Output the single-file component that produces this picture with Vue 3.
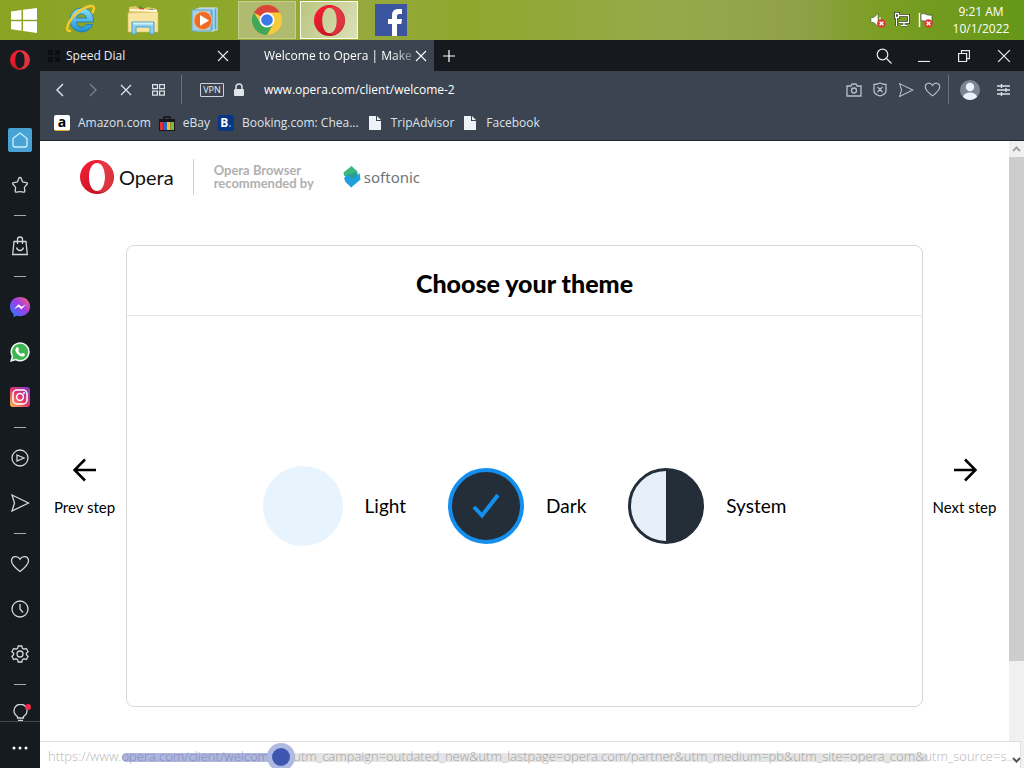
<script setup>
import { ref } from 'vue'

const theme = ref('dark')
const progress = ref(19)
const address = ref('www.opera.com/client/welcome-2')
const bookmarks = [
  { name: 'Amazon.com', icon: 'amazon' },
  { name: 'eBay', icon: 'ebay' },
  { name: 'Booking.com: Chea...', icon: 'booking' },
  { name: 'TripAdvisor', icon: 'file' },
  { name: 'Facebook', icon: 'file' },
]
const themes = [
  { id: 'light', label: 'Light' },
  { id: 'dark', label: 'Dark' },
  { id: 'system', label: 'System' },
]
const status =
  'https://www.opera.com/client/welcome-2?utm_campaign=outdated_new&utm_lastpage=opera.com/partner&utm_medium=pb&utm_site=opera_com&utm_source=s...'
</script>

<template>
  <div class="desktop">
    <svg class="defs" aria-hidden="true">
      <defs>
        <linearGradient id="operaRed" x1="0" y1="0" x2="1" y2="1">
          <stop offset="0" stop-color="#ff2038" />
          <stop offset="1" stop-color="#b0101c" />
        </linearGradient>
        <symbol id="opera" viewBox="0 0 34 34">
          <path fill="url(#operaRed)" fill-rule="evenodd" d="M17 0a17 17 0 1 0 0 34a17 17 0 1 0 0-34zM17 3c5 0 8 6 8 14s-3 14-8 14s-8-6-8-14s3-14 8-14z" />
          <path fill="#f0505a" fill-opacity=".55" d="M17 3c3-2 7-2 10 1c9 7 9 19 0 26c-3 3-7 3-10 1c5 0 8-6 8-14s-3-14-8-14z" />
        </symbol>
        <linearGradient id="msg" x1="1" y1="0" x2="0" y2="1">
          <stop offset="0" stop-color="#ff6a64" /><stop offset=".45" stop-color="#a23be8" /><stop offset="1" stop-color="#1687ff" />
        </linearGradient>
        <linearGradient id="insta" x1="0" y1="1" x2="1" y2="0">
          <stop offset="0" stop-color="#fdc04f" /><stop offset=".5" stop-color="#e03370" /><stop offset="1" stop-color="#7a3bd0" />
        </linearGradient>
        <linearGradient id="ie" x1="0" y1="0" x2="0" y2="1">
          <stop offset="0" stop-color="#8fe0fa" /><stop offset="1" stop-color="#1c8fd0" />
        </linearGradient>
        <symbol id="x" viewBox="0 0 12 12"><path d="M1 1l10 10M11 1L1 11" fill="none" stroke="currentColor" stroke-width="1.1" /></symbol>
        <symbol id="heart" viewBox="0 0 20 20"><path d="M10 17.5C6 14.500 1.500 11 1.500 6.800C1.500 2 7.500 1 10 5.200C12.500 1 18.500 2 18.500 6.800C18.500 11 14 14.500 10 17.500z" /></symbol>
        <symbol id="send" viewBox="0 0 20 20"><path d="M2 2l16.500 8L2 18l2.500-8z" /></symbol>
        <symbol id="badx" viewBox="0 0 10 10"><circle cx="5" cy="5" r="4.800" fill="#dd3b32" /><path d="M3 3l4 4M7 3L3 7" stroke="#fff" stroke-width="1.500" /></symbol>
      </defs>
    </svg>

    <header class="taskbar">
      <button class="task start" aria-label="Start">
        <svg width="28" height="27" viewBox="0 0 28 27" fill="#fff"><path d="M1 4.500l10.500-1.500v9.700H1zM13 2.800L27 1v11.700H13zM1 14.200h10.500v9.500L1 22.300zM13 14.200h14V26l-14-2z" /></svg>
      </button>
      <button class="task" aria-label="Internet Explorer">
        <svg width="32" height="32" viewBox="0 0 32 32"><path fill="url(#ie)" stroke="#1c78b0" stroke-width=".8" fill-rule="evenodd" d="M16.500 4a12 12 0 1 0 11.300 16.500h-6.500c-3 4.500-9.500 3-9.800-2.500h17C29 10 24 4 16.500 4zm-5 10c1-5.500 9-5.500 10 0z" /><path d="M5 27C-1 28 3 16 13 8C21 2 29 0 29 4c0 1.500-.6 3-1.600 4.500" fill="none" stroke="#f4c92e" stroke-width="2.500" stroke-linecap="round" /></svg>
      </button>
      <button class="task" aria-label="File Explorer">
        <svg width="32" height="30" viewBox="0 0 32 30"><path d="M2 2l7-1 2 2h8l2-1 9 2v20H1z" fill="#e6c66b" /><path d="M1 8l30-1v20H1z" fill="#f8e5a2" stroke="#d8b85a" stroke-width=".6" /><path d="M12 1h3v3h-3z" fill="#4b9b46" /><path d="M4 4h3v2H4z" fill="#4b9b46" /><path d="M13 3h4v2h-4z" fill="#d3533c" /><path d="M22 4h4v2h-4z" fill="#3d78b5" /><path d="M3 5l27 1" stroke="#fff8db" stroke-width="2" /><path d="M5 29V17h22v12h-4v-7H9v7z" fill="#8fd0ec" stroke="#4c9fc4" /><path d="M6 18.500h20" stroke="#d1f0fb" stroke-width="2" /></svg>
      </button>
      <button class="task" aria-label="Media Player">
        <svg width="28" height="26" viewBox="0 0 28 26"><path d="M8 1h18v22H8z" fill="#56a5d0" stroke="#d5ecf8" /><path d="M5 2h18v22H5z" fill="#70b5db" stroke="#d5ecf8" /><path d="M1 3h19v21H1z" fill="#a4d1e6" stroke="#68a8cc" /><circle cx="12" cy="13.500" r="9" fill="#ee6b24" stroke="#f9b07a" /><path d="M9 8l9 5.500L9 19z" fill="#fff" /></svg>
      </button>
      <button class="task open" aria-label="Chrome">
        <svg width="30" height="30" viewBox="0 0 30 30"><circle cx="15" cy="15" r="15" fill="#f8cb3d" /><path d="M15 15L2 7.500A15 15 0 0 1 28 7.500H15z" fill="#d9453a" /><path d="M2 7.500A15 15 0 0 0 15 30l6.300-11.300L15 15l-6.300 3.700z" fill="#3fa757" /><circle cx="15" cy="15" r="7.500" fill="#fff" /><circle cx="15" cy="15" r="5.800" fill="#3b78e8" /></svg>
      </button>
      <button class="task open active" aria-label="Opera"><svg width="31" height="31"><use href="#opera" /></svg></button>
      <button class="task" aria-label="Facebook">
        <svg width="32" height="32" viewBox="0 0 32 32"><path d="M0 0h32v32H0z" fill="#3c55a0" /><path d="M17 32V20h-4v-5h4v-3.500C17 7 19.500 5 23.500 5H27v5h-2.500c-2 0-2.500.8-2.500 2.500V15h5l-.7 5H22v12z" fill="#fff" /></svg>
      </button>
      <div class="tray">
        <svg width="16" height="16" viewBox="0 0 16 16"><path d="M1 5.500h3L8 1.500v13L4 10.500H1z" fill="#fff" stroke="#444" stroke-width=".5" /><path d="M10 5v6" stroke="#fff" /><use href="#badx" x="7" y="7" width="9" height="9" /></svg>
        <svg width="16" height="16" viewBox="0 0 16 16" fill="none" stroke="#30371c" stroke-width="3"><path d="M5 3.500h9.500v7H5M7 13.500h6M10 11v2M2.500 6v8" /><path d="M1.500 1.500h3v4h-3z" /><g stroke="#fff" stroke-width="1.300"><path d="M5 3.500h9.500v7H5M7 13.500h6M10 11v2M2.500 6v8" /><path d="M1.500 1.500h3v4h-3z" /></g></svg>
        <svg width="16" height="16" viewBox="0 0 16 16"><path d="M1.500 1v14" stroke="#fff" stroke-width="1.500" /><path d="M3 2c4-1.500 5 2 11 1v7c-6 1-7-2-11-1z" fill="#fff" stroke="#333" stroke-width=".6" /><use href="#badx" x="6" y="7" width="9" height="9" /></svg>
      </div>
      <div class="clock"><span>9:21 AM</span><span>10/1/2022</span></div>
    </header>

    <div class="browser">
      <aside class="sidebar">
        <button class="menu" aria-label="Opera menu"><svg width="20" height="20"><use href="#opera" /></svg></button>
        <nav class="rail">
          <button class="home" aria-label="Home"><svg width="24" height="24" viewBox="0 0 24 24"><rect width="24" height="24" rx="2" fill="#48a2d4" stroke="none" /><path stroke="#c8f4ff" d="M5 10.500L12 5l7 5.500V17a2 2 0 0 1-2 2H7a2 2 0 0 1-2-2z" /></svg></button>
          <button aria-label="Favourites"><svg width="18" height="18" viewBox="0 0 18 18"><path stroke-linejoin="round" d="M9 1.500q1 0 1.300 1l1 2.700q.3.800 1.200 1l3 .4q1.500.4.600 1.600l-2.200 2.400q-.6.600-.5 1.400l.4 2.900q0 1.500-1.400 1.200Q9 15.300 5.600 16.100q-1.400.3-1.400-1.200l.4-2.900q.1-.8-.5-1.400L1.900 8.200q-.9-1.200.6-1.600l3-.4q.9-.2 1.200-1l1-2.700q.3-1 1.300-1z" /></svg></button>
          <hr />
          <button aria-label="Shopping"><svg width="18" height="20" viewBox="0 0 18 20"><path d="M3 5.500h12l1.300 13H1.700zM6.500 8V3.500a2.500 2.500 0 0 1 5 0V8M5.500 11.500c1 4 6 4 7 0" /></svg></button>
          <hr />
          <button aria-label="Messenger"><svg width="20" height="20" viewBox="0 0 20 20"><path fill="url(#msg)" stroke="none" d="M10 0c6 0 10 4.200 10 9.600s-4 9.600-10 9.600q-1.600 0-3-.4L3.500 20v-3C1.200 15.300 0 12.600 0 9.600C0 4.200 4 0 10 0z" /><path d="M4 12.300l4.500-5 3 2.400L16 7.200l-4.500 5-3-2.400z" fill="#fff" stroke="none" /></svg></button>
          <button aria-label="WhatsApp"><svg width="20" height="20" viewBox="0 0 20 20"><path fill="#3db550" stroke="#eef8ee" stroke-width="1.600" d="M1.200 18.800l1.300-4.500a8.800 8.800 0 1 1 3.200 3.200z" /><path fill="#fff" stroke="none" d="M6.500 5.500l1.500-.4 1.200 2.800-1 1.200q1 2 3 2.800l1.200-1.200 2.600 1.200c0 2.500-2 3-3.500 2.600C8 13.500 5 9.500 5.300 7.500z" /></svg></button>
          <button aria-label="Instagram"><svg width="20" height="20" viewBox="0 0 20 20"><rect width="20" height="20" rx="3" fill="url(#insta)" stroke="none" /><g stroke="#fff" stroke-width="1.500"><rect x="3" y="3" width="14" height="14" rx="4" /><circle cx="10" cy="10" r="3.400" /></g><circle cx="14" cy="6" r="1" fill="#fff" stroke="none" /></svg></button>
          <hr />
          <button aria-label="Player"><svg width="18" height="18" viewBox="0 0 18 18"><circle cx="9" cy="9" r="8" /><path d="M6 6l7 3-7 3z" /></svg></button>
          <button aria-label="My Flow"><svg width="20" height="20"><use href="#send" /></svg></button>
          <hr />
          <button aria-label="Bookmarks"><svg width="20" height="20"><use href="#heart" /></svg></button>
          <button aria-label="History"><svg width="18" height="18" viewBox="0 0 18 18"><circle cx="9" cy="9" r="8" /><path d="M9 4v5l3 3.500" /></svg></button>
          <button aria-label="Settings"><svg width="18" height="18" viewBox="0 0 18 18"><path d="M7.200 1h3.600l.6 2.300 1.600.9 2.300-.7 1.800 3.100-1.700 1.600v1.600l1.700 1.600-1.800 3.100-2.300-.7-1.600.9-.6 2.300H7.200l-.6-2.300-1.600-.9-2.300.7-1.800-3.100 1.700-1.600V8.200L.9 6.600l1.800-3.100 2.300.7 1.600-.9z" /><circle cx="9" cy="9" r="3" /></svg></button>
          <hr />
          <button aria-label="Tips"><svg width="24" height="22" viewBox="0 2 24 22"><path d="M9.500 16v-1.500a6.500 6.500 0 1 1 6 0V16zM10 18.500h5" /><circle cx="20" cy="5" r="3" fill="#f52c4c" stroke="none" /></svg></button>
        </nav>
        <button class="more" aria-label="More"><svg width="16" height="4" viewBox="0 0 16 4" fill="#fff"><circle cx="2" cy="2" r="1.500" /><circle cx="8" cy="2" r="1.500" /><circle cx="14" cy="2" r="1.500" /></svg></button>
      </aside>

      <div class="window">
        <div class="tabs">
          <div class="tab">
            <svg width="12" height="12" viewBox="0 0 12 12" fill="#0c0e11"><path d="M0 0h5v5H0zM7 0h5v5H7zM0 7h5v5H0zM7 7h5v5H7z" /></svg>
            <span>Speed Dial</span>
            <button aria-label="Close tab"><svg width="12" height="12"><use href="#x" /></svg></button>
          </div>
          <div class="tab current">
            <span>Welcome to Opera | Make</span>
            <button aria-label="Close tab"><svg width="12" height="12"><use href="#x" /></svg></button>
          </div>
          <button class="new" aria-label="New tab"><svg width="12" height="12" viewBox="0 0 12 12" stroke="#fff" stroke-width="1.200"><path d="M6 0v12M0 6h12" /></svg></button>
          <div class="controls">
            <button aria-label="Search tabs"><svg width="16" height="16" viewBox="0 0 16 16"><circle cx="6.500" cy="6.500" r="5.300" /><path d="M10.500 10.500l5 5" /></svg></button>
            <button aria-label="Minimize"><svg width="12" height="12" viewBox="0 0 12 12"><path d="M0 11.500h12" /></svg></button>
            <button aria-label="Restore"><svg width="12" height="12" viewBox="0 0 12 12"><path d="M.6 3.500h8v8h-8zM3.500 3.500V.6h8v8H8.600" /></svg></button>
            <button aria-label="Close"><svg width="14" height="14"><use href="#x" /></svg></button>
          </div>
        </div>

        <div class="toolbar">
          <button aria-label="Back"><svg width="8" height="14" viewBox="0 0 8 14"><path d="M7 1L1 7l6 6" stroke-width="1.500" /></svg></button>
          <button class="dim" aria-label="Forward"><svg width="8" height="14" viewBox="0 0 8 14"><path d="M1 1l6 6-6 6" /></svg></button>
          <button aria-label="Stop"><svg width="12" height="12"><use href="#x" /></svg></button>
          <button aria-label="Tab overview"><svg width="13" height="12" viewBox="0 0 13 12"><path d="M.6.6h4.800v4H.6zM7.600.6h4.800v4H7.600zM.6 7.200h4.800v4H.6zM7.600 7.200h4.800v4H7.600z" /></svg></button>
          <i class="rule"></i>
          <button class="vpn">VPN</button>
          <svg class="lock" width="10" height="14" viewBox="0 0 10 14"><rect y="6" width="10" height="7" rx="1" fill="#e0e4ea" stroke="none" /><path d="M2 7V4a3 3 0 0 1 6 0v3" stroke-width="1.500" /></svg>
          <input v-model="address" class="address" type="text" aria-label="Address" />
          <button class="tool" aria-label="Snapshot"><svg width="16" height="14" viewBox="0 0 16 14"><path d="M1 3h4l1-2h4l1 2h4v10H1z" /><circle cx="8" cy="7.500" r="2.500" /></svg></button>
          <button class="tool" aria-label="Ad blocker"><svg width="14" height="15" viewBox="0 0 14 15"><path d="M7 1c2 1 4 1.500 6 1.500V9c0 2.500-3 4-6 5C4 13 1 11.500 1 9V2.500C3 2.500 5 2 7 1zM4.500 5l5 5M9.500 5l-5 5" /></svg></button>
          <button class="tool" aria-label="Send"><svg width="16" height="16"><use href="#send" /></svg></button>
          <button class="tool" aria-label="Bookmark"><svg width="17" height="17"><use href="#heart" /></svg></button>
          <i class="rule short"></i>
          <button class="avatar" aria-label="Profile"><svg width="20" height="20" viewBox="0 0 20 20"><circle cx="10" cy="10" r="10" fill="#7c8693" stroke="none" /><circle cx="10" cy="7" r="4.200" fill="#e9f2fc" stroke="none" /><path d="M3 17c1-6 13-6 14 0c-4 4-10 4-14 0z" fill="#e9f2fc" stroke="none" /></svg></button>
          <button class="easy" aria-label="Easy setup"><svg width="13" height="12" viewBox="0 0 13 12"><path d="M0 2h13M0 6h13M0 10h13M4.500 0v4M9 4v4M4.500 8v4" /></svg></button>
        </div>

        <nav class="bookmarks" aria-label="Bookmarks bar">
          <a v-for="b in bookmarks" :key="b.name" href="#">
            <span v-if="b.icon === 'amazon'" class="fav amazon">a</span>
            <svg v-else-if="b.icon === 'ebay'" width="16" height="16" viewBox="0 0 16 16"><path d="M5 5V2h6v3" fill="none" stroke="#111" stroke-width="1.500" /><path d="M0 4h16v12H0z" fill="#15171a" /><path d="M1 7h3.500v8H1z" fill="#e43137" /><path d="M4.500 7H8v8H4.500z" fill="#2667c9" /><path d="M8 7h3.500v8H8z" fill="#f4bd27" /><path d="M11.500 7H15v8h-3.500z" fill="#86b83c" /></svg>
            <span v-else-if="b.icon === 'booking'" class="fav booking">B<i>.</i></span>
            <svg v-else width="16" height="16" viewBox="0 0 16 16" fill="#edf2f8"><path d="M2 1h7v5h5v9H2zM10 1l4 4h-4z" /></svg>
            {{ b.name }}
          </a>
        </nav>

        <div class="viewport">
          <main class="page">
            <div class="brand">
              <svg width="34" height="34"><use href="#opera" /></svg>
              <span class="word">Opera</span>
              <p>Opera Browser<br />recommended by</p>
              <svg class="softmark" width="19" height="22" viewBox="0 0 19 22"><path d="M1.500 6.500L9.500 0l6 5.500-.3 4.500L9 15 2 9.500z" fill="#3cb87c" /><path d="M2 12l4-3.200 5 3.600 6.500-5.500 1 6.500-9.300 8L3.500 16z" fill="#1f9fdc" /><path d="M6 8.800l5 3.600 4-3.400.2-3z" fill="#279c96" /></svg>
              <span class="softonic">softonic</span>
            </div>
            <div class="stage">
              <button class="step prev"><svg width="24" height="24" viewBox="0 0 24 24"><path d="M23 12H2M12 1.500L1.500 12 12 22.500" /></svg><span>Prev step</span></button>
              <section class="card">
                <h1>Choose your theme</h1>
                <div class="choices">
                  <label v-for="t in themes" :key="t.id">
                    <span class="dot" :class="t.id">
                      <input v-model="theme" type="radio" name="theme" :value="t.id" />
                      <svg v-if="theme === t.id" width="28" height="26" viewBox="0 0 28 26"><path d="M2 14l8 8.500L26 2" fill="none" stroke="#158fee" stroke-width="4" /></svg>
                    </span>
                    {{ t.label }}
                  </label>
                </div>
              </section>
              <button class="step next"><svg width="24" height="24" viewBox="0 0 24 24"><path d="M1 12h21M12 1.500L22.500 12 12 22.500" /></svg><span>Next step</span></button>
            </div>
          </main>
          <div class="scroll">
            <svg width="9" height="6" viewBox="0 0 9 6"><path d="M1 5l3.500-3.500L8 5" fill="none" stroke="#a3a3a3" stroke-width="2" /></svg>
            <div class="thumb"></div>
          </div>
          <div class="status">{{ status }}</div>
          <svg class="down" width="9" height="6" viewBox="0 0 9 6"><path d="M1 1l3.500 3.500L8 1" fill="none" stroke="#555" stroke-width="2" /></svg>
          <input v-model="progress" class="seek" type="range" min="0" max="100" aria-label="Playback position" />
        </div>
      </div>
    </div>
  </div>
</template>

<style>
body { margin: 0; }
</style>

<style scoped>
* { box-sizing: border-box; }
.desktop { display: flex; flex-direction: column; height: 100vh; overflow: hidden; font: 12px/16px "Open Sans", "Noto Sans", sans-serif; color: #e8ecf2; background: #fff; }
.defs { position: absolute; width: 0; height: 0; }
button { display: flex; align-items: center; justify-content: center; flex: none; padding: 0; border: 0; background: none; color: inherit; font: inherit; cursor: pointer; }
.taskbar { display: flex; align-items: center; gap: 4px; flex: none; height: 40px; background: linear-gradient(90deg, #8ba323 0, #8ea82c 22%, #98a840 34%, #8fa72d 45%, #96a94a 65%, #91a04a 78%, #7a9e22 86%, #659719 100%); }
.task { width: 58px; height: 38px; }
.task.start { width: 48px; }
.task.open { border: 1px solid #c6cf8e; background: #b1bb70; }
.task.active { border-color: #fafbe8; background: linear-gradient(120deg, #bac680, #dce0b8); }
.tray { display: flex; gap: 8px; margin-left: auto; }
.clock { display: flex; flex-direction: column; align-items: center; width: 86px; line-height: 17px; color: #fff; }
.browser { display: flex; flex: 1; min-height: 0; }
.sidebar { display: flex; flex-direction: column; flex: none; width: 40px; background: #161b20; }
.menu { height: 40px; margin-bottom: 37px; }
.rail { flex: 1; min-height: 0; overflow: hidden; }
.rail button { width: 40px; height: 45px; }
.rail svg { fill: none; stroke: #d3d7dc; stroke-width: 1.3; }
.rail hr { width: 12px; height: 1px; margin: 8px auto 7px; border: 0; background: #a6abb0; }
.more { height: 47px; padding-top: 6px; border-top: 1px solid #42484e; }
.window { display: flex; flex-direction: column; flex: 1; min-width: 0; }
.tabs { display: flex; flex: none; height: 31px; background: #161a1f; }
.tab { display: flex; align-items: center; gap: 6px; width: 200px; padding: 0 11px 0 8px; }
.tab span { flex: 1; min-width: 0; overflow: hidden; white-space: nowrap; }
.tab.current { gap: 2px; width: 194px; padding: 0 7px 0 24px; background: #3b4450; color: #fff; }
.tab.current span { mask-image: linear-gradient(90deg, #000 86%, rgba(0, 0, 0, .3) 100%); }
.new { width: 30px; }
.controls { display: flex; margin-left: auto; }
.controls button { width: 40px; }
.controls svg { fill: none; stroke: #e8ecf2; stroke-width: 1.2; }
.toolbar { display: flex; align-items: center; flex: none; height: 37px; padding: 0 8px 0 3px; background: #3b4450; }
.toolbar button { width: 33px; height: 28px; }
.toolbar svg { fill: none; stroke: #dbe0e7; stroke-width: 1.3; }
.toolbar .dim { opacity: .4; }
.rule { width: 1px; height: 29px; margin: 0 18px 0 6px; background: #68717c; }
.rule.short { margin: 0 6px 0 3px; }
.toolbar .vpn { width: 24px; height: 14px; border: 1px solid #ccd2da; border-radius: 1px; font-size: 9px; line-height: 12px; }
.lock { margin: 0 20px 0 10px; }
.address { flex: 1; min-width: 0; padding: 0; border: 0; outline: 0; background: none; color: #fff; font: 12px/20px "Open Sans", "Noto Sans", sans-serif; }
.toolbar .tool, .toolbar .easy { width: 26px; }
.toolbar .tool svg { stroke: #b9c0ca; }
.toolbar .avatar { width: 30px; margin-right: 5px; }
.bookmarks { display: flex; align-items: center; gap: 8px; flex: none; height: 33px; padding: 0 14px 3px; border-bottom: 1px solid #1f252d; background: #3b4450; }
.bookmarks a { display: flex; align-items: center; gap: 8px; color: #dde2ea; text-decoration: none; white-space: nowrap; }
.fav { width: 16px; height: 16px; border-radius: 2px; text-align: center; font-weight: 700; }
.amazon { background: #fff; color: #000; font-size: 14px; line-height: 13px; border-bottom: 1px solid #e9a83a; }
.booking { background: #073785; color: #fff; }
.booking i { color: #2ba8ee; font-style: normal; }
.viewport { position: relative; display: flex; flex: 1; min-height: 0; background: #fff; }
.page { display: flex; flex-direction: column; flex: 1; min-width: 0; padding: 18px 0 61px; color: #000; font-family: Lato, "Open Sans", sans-serif; }
.brand { display: flex; align-items: center; height: 36px; padding-left: 40px; }
.word { margin: 0 19px 0 5px; font: 400 20px/28px Lato, sans-serif; color: #111; }
.brand p { margin: 0; padding: 5px 0 5px 20px; border-left: 1px solid #d2d2d2; color: #b0b0b0; font: 700 13px/13px Lato, sans-serif; }
.softmark { margin: 0 3px 0 28px; }
.softonic { color: #707478; font: 15px/24px "Noto Sans", sans-serif; }
.stage { display: flex; flex: 1; margin-top: 50px; }
.step { flex-direction: column; gap: 17px; width: 86px; padding-top: 20px; font: 15px/16px Lato, sans-serif; color: #000; }
.prev { padding-left: 3px; }
.next { padding-right: 3px; }
.step svg { fill: none; stroke: #000; stroke-width: 2.6; }
.card { display: flex; flex-direction: column; flex: 1; min-width: 0; border: 1px solid #d8d8d8; border-radius: 8px; }
h1 { margin: 0; padding: 22px 0 16px; border-bottom: 1px solid #e8e8e8; text-align: center; font: 900 25px/31px Lato, sans-serif; }
.choices { display: flex; align-items: center; justify-content: center; gap: 42px; flex: 1; padding-bottom: 11px; }
.choices label { display: flex; align-items: center; gap: 22px; font-size: 19px; line-height: 24px; }
.dot { display: grid; place-items: center; width: 76px; height: 76px; border-radius: 50%; }
.dot input, .dot svg { grid-area: 1 / 1; }
.dot input { appearance: none; width: 100%; height: 100%; margin: 0; border-radius: 50%; }
.dot.light { width: 80px; height: 80px; }
.light input { background: #e7f4fe; }
.dark input { background: #242e38; }
.dark input:checked { border: 4px solid #158fee; }
.system input { border: 3px solid #242e38; background: linear-gradient(90deg, #e7eff9 50%, #242e38 50%); }
.dot svg { pointer-events: none; }
.scroll { display: flex; flex-direction: column; align-items: center; flex: none; width: 15px; padding-top: 5px; background: #f0f0f0; }
.thumb { width: 100%; height: 81%; margin-top: 5px; background: #cdcdcd; }
.status { position: absolute; left: 0; right: 3px; bottom: 0; height: 27px; padding: 5px 0 5px 8px; overflow: hidden; border-top: 1px solid #ddd; border-right: 1px solid #e2e2e2; background: rgba(255, 255, 255, .92); color: #b6b6b6; font-size: 13px; line-height: 18px; font-weight: 300; white-space: nowrap; }
.down { position: absolute; right: 3px; bottom: 5px; }
.seek { position: absolute; left: 82px; right: 96px; bottom: 0; height: 22px; margin: 0; appearance: none; background: none; }
.seek::-webkit-slider-runnable-track { height: 9px; border-radius: 5px; background: linear-gradient(90deg, rgba(63, 81, 181, .42) 20%, rgba(0, 0, 0, .1) 20%); }
.seek::-webkit-slider-thumb { appearance: none; width: 18px; height: 18px; margin-top: -5px; border-radius: 50%; background: #3d57b0; box-shadow: 0 0 0 5px #b0b9e2; }
</style>
